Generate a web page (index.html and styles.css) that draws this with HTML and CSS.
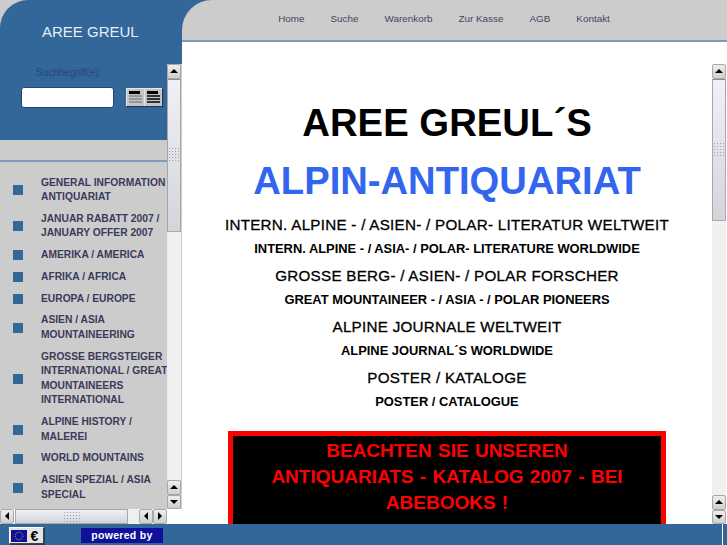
FILE: index.html
```html
<!DOCTYPE html>
<html lang="de">
<head>
  <meta charset="UTF-8">
  <title>Aree Greul Alpin-Antiquariat</title>
  <link rel="stylesheet" href="styles.css">
</head>
<body>
  <div class="page">
    <div class="left">
      <div class="logo">AREE GREUL</div>
      <div class="left-body">
        <div class="left-content">
          <form class="search">
            <div class="search-label">Suchbegriff(e):</div>
            <div class="search-row">
              <div class="search-input"></div>
              <div class="search-btns">
                <span class="book">
                  <svg width="18" height="18" viewBox="0 0 18 18"><rect width="18" height="18" fill="#c4c4c4"/><path d="M.5 18V.5H18" fill="none" stroke="#e8e8e8"/><rect x="3" y="3" width="11" height="3" fill="#000"/><path d="M3 8h13M3 11h13M3 14h13" stroke="#888" stroke-width="1.5"/></svg>
                </span>
                <span class="book">
                  <svg width="18" height="18" viewBox="0 0 18 18"><rect width="18" height="18" fill="#c4c4c4"/><path d="M.5 18V.5H18" fill="none" stroke="#e8e8e8"/><rect x="3" y="3" width="11" height="3" fill="#000"/><path d="M3 8h13M3 11h13M3 14h13" stroke="#000" stroke-width="1.5"/></svg>
                </span>
              </div>
            </div>
          </form>
          <div class="strip"></div>
          <ul class="menu">
            <li><i></i><a>GENERAL INFORMATION<br>ANTIQUARIAT</a></li>
            <li><i></i><a>JANUAR RABATT 2007 /<br>JANUARY OFFER 2007</a></li>
            <li><i></i><a>AMERIKA / AMERICA</a></li>
            <li><i></i><a>AFRIKA / AFRICA</a></li>
            <li><i></i><a>EUROPA / EUROPE</a></li>
            <li><i></i><a>ASIEN / ASIA<br>MOUNTAINEERING</a></li>
            <li><i></i><a>GROSSE BERGSTEIGER<br>INTERNATIONAL / GREAT<br>MOUNTAINEERS<br>INTERNATIONAL</a></li>
            <li><i></i><a>ALPINE HISTORY /<br>MALEREI</a></li>
            <li><i></i><a>WORLD MOUNTAINS</a></li>
            <li><i></i><a>ASIEN SPEZIAL / ASIA<br>SPECIAL</a></li>
          </ul>
        </div>
        <div class="vbar vbar-left">
          <div class="sb-btn"><span class="arrow up"></span></div>
          <div class="thumb"><span class="grip"></span></div>
          <div class="track"></div>
          <div class="sb-btn"><span class="arrow up"></span></div>
          <div class="sb-btn"><span class="arrow down"></span></div>
        </div>
      </div>
      <div class="hbar">
        <div class="sb-btn"><span class="arrow lft"></span></div>
        <div class="hthumb"><span class="grip"></span></div>
        <div class="htrack"></div>
        <div class="sb-btn"><span class="arrow lft"></span></div>
        <div class="sb-btn"><span class="arrow rgt"></span></div>
      </div>
    </div>

    <div class="right">
      <nav class="nav">
        <a>Home</a>
        <a>Suche</a>
        <a>Warenkorb</a>
        <a>Zur Kasse</a>
        <a>AGB</a>
        <a>Kontakt</a>
      </nav>
      <div class="right-body">
        <div class="main">
          <h1>AREE GREUL´S</h1>
          <h2>ALPIN-ANTIQUARIAT</h2>
          <p class="big">INTERN. ALPINE - / ASIEN- / POLAR- LITERATUR WELTWEIT</p>
          <p class="small">INTERN. ALPINE - / ASIA- / POLAR- LITERATURE WORLDWIDE</p>
          <p class="big">GROSSE BERG- / ASIEN- / POLAR FORSCHER</p>
          <p class="small">GREAT MOUNTAINEER - / ASIA - / POLAR PIONEERS</p>
          <p class="big">ALPINE JOURNALE WELTWEIT</p>
          <p class="small">ALPINE JOURNAL´S WORLDWIDE</p>
          <p class="big">POSTER / KATALOGE</p>
          <p class="small">POSTER / CATALOGUE</p>
          <div class="notice">BEACHTEN SIE UNSEREN<br>ANTIQUARIATS - KATALOG 2007 - BEI<br>ABEBOOKS !</div>
        </div>
        <div class="vbar">
          <div class="sb-btn"><span class="arrow up"></span></div>
          <div class="thumb thumb-main"><span class="grip"></span></div>
          <div class="track"></div>
          <div class="sb-btn"><span class="arrow up"></span></div>
          <div class="sb-btn"><span class="arrow down"></span></div>
        </div>
      </div>
    </div>

    <footer class="footer">
      <div class="eu">
        <svg width="16" height="12" viewBox="0 0 16 12">
          <rect width="16" height="12" fill="#10109a"/>
          <circle cx="8" cy="6" r="3.8" fill="none" stroke="#d8c020" stroke-width="1" stroke-dasharray="1 1.1"/>
        </svg>
        <span>€</span>
      </div>
      <div class="powered">powered by</div>
      <span class="footer-line"></span>
    </footer>
  </div>
</body>
</html>
```

FILE: styles.css
```css
* { box-sizing: border-box; }

html, body {
  margin: 0;
  padding: 0;
  height: 100%;
  overflow: hidden;
  background: #336699;
  font-family: "Liberation Sans", Arial, sans-serif;
}

.page {
  position: relative;
  display: grid;
  grid-template-columns: 182px 545px;
  grid-template-rows: 524px 21px;
  width: 727px;
  height: 545px;
}

/* left column */
.left {
  display: flex;
  flex-direction: column;
  background: #cccccc;
  overflow: hidden;
}

.logo {
  height: 64px;
  padding: 23px 0 0 42px;
  background: #336699;
  border-top-left-radius: 28px;
  color: #e8eef4;
  font-size: 15px;
  line-height: 18px;
}

.left-body {
  display: flex;
  height: 445px;
}

.left-content {
  width: 167px;
  overflow: hidden;
}

.search {
  height: 76px;
  margin: 0;
  background: #336699;
}

.search-label {
  height: 23px;
  padding: 3px 0 0 36px;
  color: #27477a;
  font-size: 10px;
}

.search-row {
  display: flex;
  align-items: flex-start;
  padding-left: 21px;
}

.search-input {
  width: 93px;
  height: 21px;
  background: #fff;
  border: 1px solid #23466e;
  border-radius: 3px;
}

.search-btns {
  display: flex;
  margin: 1px 0 0 12px;
  box-shadow: 1px 1px 1px #1f3c5c;
}

.book {
  display: block;
  width: 18px;
  height: 18px;
}

.book svg {
  display: block;
}

.strip {
  height: 22px;
  border-bottom: 2px solid #7d9cba;
  background: #cccccc;
}

.menu {
  margin: 0;
  padding: 13.5px 0 0 13px;
  list-style: none;
}

.menu li {
  display: flex;
  align-items: center;
  margin-bottom: 7.3px;
  white-space: nowrap;
}

.menu i {
  flex: none;
  width: 10px;
  height: 10px;
  margin-right: 18px;
  background: #336699;
}

.menu a {
  color: #3a3a5a;
  font-size: 10.25px;
  font-weight: bold;
  line-height: 14.5px;
}

/* scrollbars */
.vbar {
  display: flex;
  flex: none;
  flex-direction: column;
  width: 14px;
  margin: 0 1px 0 0;
}

.vbar-left .thumb {
  height: 153px;
}

.sb-btn {
  display: flex;
  flex: none;
  align-items: center;
  justify-content: center;
  width: 14px;
  height: 14.5px;
  background: linear-gradient(#eeeeee, #cfcfcf);
  border: 1px solid #a8a8a8;
  border-radius: 2px;
}

.thumb {
  display: flex;
  flex: none;
  align-items: center;
  justify-content: center;
  height: 142px;
  background: linear-gradient(#f0f1f6, #d4d5da);
  border: 1px solid #a8a8a8;
  border-top-color: #8e8e8e;
}

.track {
  flex: 1;
  background-color: #f4f4f4;
  background-image: linear-gradient(45deg, #e6e6e6 25%, transparent 25%, transparent 75%, #e6e6e6 75%);
  background-size: 2px 2px;
}

.grip {
  display: block;
  width: 12px;
  height: 16px;
  background-image: radial-gradient(#a0a0a0 0.8px, transparent 1px);
  background-size: 3px 3px;
}

.arrow {
  display: block;
  width: 0;
  height: 0;
  border: 4px solid transparent;
}

.arrow.up { border-top: 0; border-bottom-color: #000; }
.arrow.down { border-bottom: 0; border-top-color: #000; }
.arrow.lft { border-left: 0; border-right-color: #000; }
.arrow.rgt { border-right: 0; border-left-color: #000; }

.hbar {
  display: flex;
  height: 15px;
  padding-right: 15px;
  background: #fff;
}

.hthumb {
  display: flex;
  flex: none;
  align-items: center;
  justify-content: center;
  width: 113px;
  margin-left: 1px;
  background: linear-gradient(#f0f1f6, #d4d5da);
  border: 1px solid #a8a8a8;
}

.hthumb .grip {
  width: 18px;
  height: 12px;
}

.htrack {
  flex: 1;
  background-color: #f4f4f4;
  background-image: linear-gradient(45deg, #e6e6e6 25%, transparent 25%, transparent 75%, #e6e6e6 75%);
  background-size: 2px 2px;
}

/* right column */
.right {
  display: flex;
  flex-direction: column;
  background: #fff;
}

.nav {
  display: flex;
  justify-content: center;
  gap: 26px;
  height: 42px;
  padding: 13px 21px 0 0;
  background: #cccccc;
  border-bottom: 2px solid #7d9cba;
  border-top-left-radius: 30px;
  box-shadow: -30px 0 0 #336699;
  font-size: 9.9px;
  line-height: 12px;
  color: #44445e;
}

.right-body {
  display: flex;
  flex: 1;
  min-height: 0;
  padding-top: 22px;
}

.main {
  flex: 1;
  min-width: 0;
  overflow: hidden;
  color: #000;
  font-weight: bold;
  text-align: center;
}

.main h1 {
  margin: 0;
  padding-top: 34px;
  font-size: 38.3px;
  line-height: 50px;
}

.main h2 {
  margin: 7px 0 8px;
  color: #3366ee;
  font-size: 38.2px;
  line-height: 52px;
}

.main p {
  margin: 0;
}

.main .big {
  margin-top: 7px;
  font-size: 15.2px;
  line-height: 20px;
  font-weight: normal;
  letter-spacing: 0.27px;
  -webkit-text-stroke: 0.3px #000;
}

.main .small {
  margin: 4px 0 7px;
  font-size: 12.9px;
  line-height: 20px;
}

.notice {
  width: 438px;
  margin: 19px 0 0 46px;
  padding: 2px 0 12px;
  background: #000;
  border: 5px solid #ff0000;
  color: #ff0000;
  font-size: 19px;
  line-height: 26px;
  word-spacing: 1px;
}

/* footer */
.footer {
  display: flex;
  grid-column: 1 / 3;
  align-items: flex-start;
  padding: 3px 0 0 9px;
  background: #336699;
}

.eu {
  display: flex;
  align-items: center;
  width: 35px;
  height: 17px;
  padding-left: 1px;
  background: #e4e4e4;
  border: 1px solid #fff;
  border-right-color: #444;
  border-bottom-color: #444;
  box-shadow: 1px 1px 0 #1c3d5e;
}

.eu svg {
  display: block;
  flex: none;
}

.eu span {
  width: 15px;
  color: #000;
  font-size: 14px;
  font-weight: bold;
  line-height: 14px;
  text-align: center;
}

.powered {
  width: 82px;
  height: 15px;
  margin: 1px 0 0 37px;
  background: #10109a;
  color: #fff;
  font-size: 10.5px;
  font-weight: bold;
  line-height: 14px;
  text-align: center;
  letter-spacing: 0.3px;
}

.footer-line {
  position: absolute;
  left: 722px;
  bottom: 0;
  width: 1px;
  height: 21px;
  background: #fff;
}
```
